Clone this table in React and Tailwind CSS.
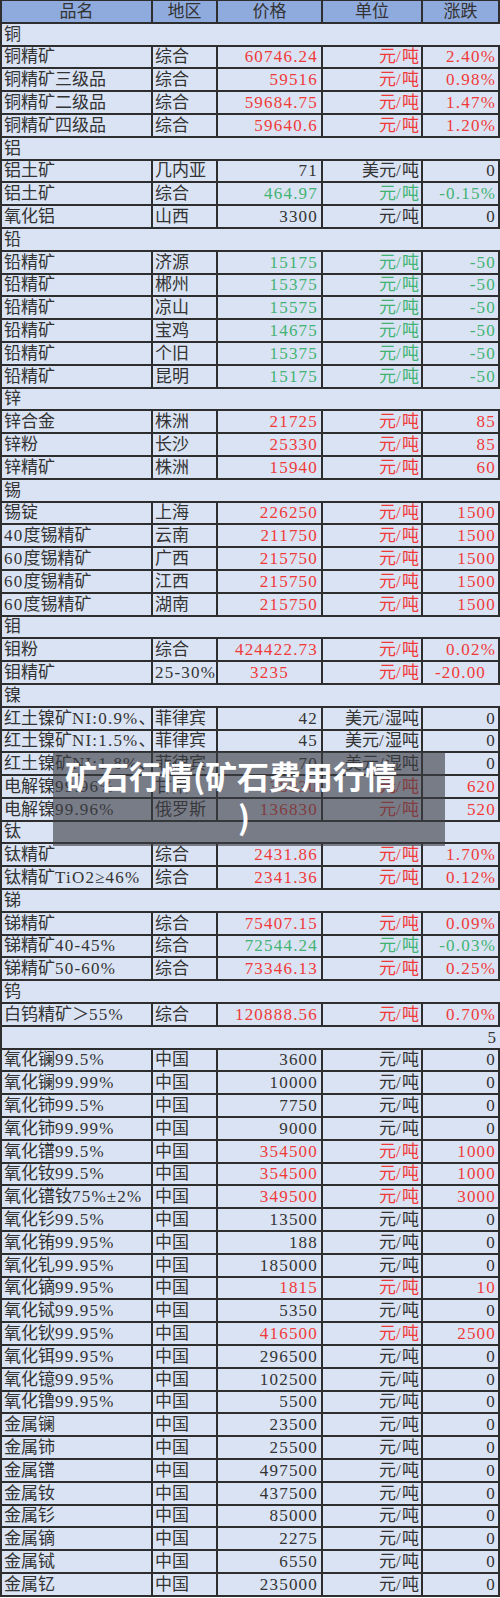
import React from 'react';

// r = red (up), g = green (down), k = flat
const rows = [
  { s: '铜' },
  ['铜精矿', '综合', '60746.24', '元/吨', '2.40%', 'r'],
  ['铜精矿三级品', '综合', '59516', '元/吨', '0.98%', 'r'],
  ['铜精矿二级品', '综合', '59684.75', '元/吨', '1.47%', 'r'],
  ['铜精矿四级品', '综合', '59640.6', '元/吨', '1.20%', 'r'],
  { s: '铝' },
  ['铝土矿', '几内亚', '71', '美元/吨', '0', 'k'],
  ['铝土矿', '综合', '464.97', '元/吨', '-0.15%', 'g'],
  ['氧化铝', '山西', '3300', '元/吨', '0', 'k'],
  { s: '铅' },
  ['铅精矿', '济源', '15175', '元/吨', '-50', 'g'],
  ['铅精矿', '郴州', '15375', '元/吨', '-50', 'g'],
  ['铅精矿', '凉山', '15575', '元/吨', '-50', 'g'],
  ['铅精矿', '宝鸡', '14675', '元/吨', '-50', 'g'],
  ['铅精矿', '个旧', '15375', '元/吨', '-50', 'g'],
  ['铅精矿', '昆明', '15175', '元/吨', '-50', 'g'],
  { s: '锌' },
  ['锌合金', '株洲', '21725', '元/吨', '85', 'r'],
  ['锌粉', '长沙', '25330', '元/吨', '85', 'r'],
  ['锌精矿', '株洲', '15940', '元/吨', '60', 'r'],
  { s: '锡' },
  ['锡锭', '上海', '226250', '元/吨', '1500', 'r'],
  ['40度锡精矿', '云南', '211750', '元/吨', '1500', 'r'],
  ['60度锡精矿', '广西', '215750', '元/吨', '1500', 'r'],
  ['60度锡精矿', '江西', '215750', '元/吨', '1500', 'r'],
  ['60度锡精矿', '湖南', '215750', '元/吨', '1500', 'r'],
  { s: '钼' },
  ['钼粉', '综合', '424422.73', '元/吨', '0.02%', 'r'],
  ['钼精矿', '25-30%', '3235', '元/吨', '-20.00', 'r', true],
  { s: '镍' },
  ['红土镍矿NI:0.9%、Fe', '菲律宾', '42', '美元/湿吨', '0', 'k'],
  ['红土镍矿NI:1.5%、Fe', '菲律宾', '45', '美元/湿吨', '0', 'k'],
  ['红土镍矿NI:1.8%、Fe', '菲律宾', '70', '美元/湿吨', '0', 'k'],
  ['电解镍99.96%', '甘肃', '138830', '元/吨', '620', 'r'],
  ['电解镍99.96%', '俄罗斯', '136830', '元/吨', '520', 'r'],
  { s: '钛' },
  ['钛精矿', '综合', '2431.86', '元/吨', '1.70%', 'r'],
  ['钛精矿TiO2≥46%', '综合', '2341.36', '元/吨', '0.12%', 'r'],
  { s: '锑' },
  ['锑精矿', '综合', '75407.15', '元/吨', '0.09%', 'r'],
  ['锑精矿40-45%', '综合', '72544.24', '元/吨', '-0.03%', 'g'],
  ['锑精矿50-60%', '综合', '73346.13', '元/吨', '0.25%', 'r'],
  { s: '钨' },
  ['白钨精矿＞55%', '综合', '120888.56', '元/吨', '0.70%', 'r'],
  { s: '', right: '5' },
  ['氧化镧99.5%', '中国', '3600', '元/吨', '0', 'k'],
  ['氧化镧99.99%', '中国', '10000', '元/吨', '0', 'k'],
  ['氧化铈99.5%', '中国', '7750', '元/吨', '0', 'k'],
  ['氧化铈99.99%', '中国', '9000', '元/吨', '0', 'k'],
  ['氧化镨99.5%', '中国', '354500', '元/吨', '1000', 'r'],
  ['氧化钕99.5%', '中国', '354500', '元/吨', '1000', 'r'],
  ['氧化镨钕75%±2%', '中国', '349500', '元/吨', '3000', 'r'],
  ['氧化钐99.5%', '中国', '13500', '元/吨', '0', 'k'],
  ['氧化铕99.95%', '中国', '188', '元/吨', '0', 'k'],
  ['氧化钆99.95%', '中国', '185000', '元/吨', '0', 'k'],
  ['氧化镝99.95%', '中国', '1815', '元/吨', '10', 'r'],
  ['氧化铽99.95%', '中国', '5350', '元/吨', '0', 'k'],
  ['氧化钬99.95%', '中国', '416500', '元/吨', '2500', 'r'],
  ['氧化铒99.95%', '中国', '296500', '元/吨', '0', 'k'],
  ['氧化镱99.95%', '中国', '102500', '元/吨', '0', 'k'],
  ['氧化镥99.95%', '中国', '5500', '元/吨', '0', 'k'],
  ['金属镧', '中国', '23500', '元/吨', '0', 'k'],
  ['金属铈', '中国', '25500', '元/吨', '0', 'k'],
  ['金属镨', '中国', '497500', '元/吨', '0', 'k'],
  ['金属钕', '中国', '437500', '元/吨', '0', 'k'],
  ['金属钐', '中国', '85000', '元/吨', '0', 'k'],
  ['金属镝', '中国', '2275', '元/吨', '0', 'k'],
  ['金属铽', '中国', '6550', '元/吨', '0', 'k'],
  ['金属钇', '中国', '235000', '元/吨', '0', 'k'],
];

const colorOf = { r: 'text-[#f03a3a]', g: 'text-[#42b373]', k: 'text-[#333333]' };

// latin runs get extra spacing so digits sit as wide as the sheet's fixed-width ones
const T = ({ children }) =>
  String(children)
    .split(/([\u0020-\u00ff\u2265]+)/)
    .filter(Boolean)
    .map((part, i) =>
      /^[\u0020-\u00ff\u2265]+$/.test(part) ? (
        <span key={i} className="tracking-[1.2px]">{part}</span>
      ) : (
        <span key={i}>{part}</span>
      )
    );

const cellBase = 'border-r-2 border-[#2e2e2e] flex items-end overflow-hidden whitespace-nowrap leading-[20px]';

const DataRow = ({ row }) => {
  const [name, region, price, unit, change, c, centered] = row;
  const col = colorOf[c];
  return (
    <div className="grid grid-cols-[151px_65px_105px_100px_77px] h-[22.8px] border-b-2 border-[#2e2e2e]">
      <div className={`${cellBase} pl-[2px] text-[#333333]`}><T>{name}</T></div>
      <div className={`${cellBase} pl-[2px] text-[#333333]`}><T>{region}</T></div>
      <div className={`${cellBase} ${centered ? 'justify-center' : 'justify-end pr-[3px]'} ${col}`}><T>{price}</T></div>
      <div className={`${cellBase} justify-end pr-[2px] ${col}`}><T>{unit}</T></div>
      <div className={`${cellBase} ${centered ? 'justify-center' : 'justify-end pr-[2px]'} ${col}`}><T>{change}</T></div>
    </div>
  );
};

const SectionRow = ({ row }) => (
  <div className={`h-[22.8px] border-b-2 border-[#2e2e2e] flex items-end leading-[20px] text-[#333333] ${row.right ? 'justify-end pr-[4px]' : 'pl-[2px]'}`}>
    {row.right || row.s}
  </div>
);

export default function App() {
  return (
    <div
      className="relative w-[500px] bg-[#dae3f3] border-l-2 border-t border-[#2e2e2e] text-[17px]"
      style={{ fontFamily: '"Liberation Serif", "Noto Sans CJK SC", serif' }}
    >
      <div className="grid grid-cols-[151px_65px_105px_100px_77px] h-[22.8px] bg-[#8faadc] border-b-2 border-[#2e2e2e] text-[#333333] leading-[20px]">
        {['品名', '地区', '价格', '单位', '涨跌'].map((h) => (
          <div key={h} className="border-r-2 border-[#2e2e2e] flex items-end justify-center">
            {h}
          </div>
        ))}
      </div>

      {rows.map((row, i) =>
        Array.isArray(row) ? <DataRow key={i} row={row} /> : <SectionRow key={i} row={row} />
      )}

      {/* watermark title over the table */}
      <div
        className="absolute left-[51px] top-[751px] w-[392px] h-[94px] bg-[rgba(60,62,68,0.62)] pt-[3px] text-white text-[32px] font-bold leading-[41px]"
        style={{ fontFamily: '"Noto Sans CJK SC", "Noto Sans", sans-serif' }}
      >
        <div className="pl-[12px] whitespace-nowrap">矿石行情(矿石费用行情</div>
        <div className="pl-[185px]">)</div>
      </div>
    </div>
  );
}
